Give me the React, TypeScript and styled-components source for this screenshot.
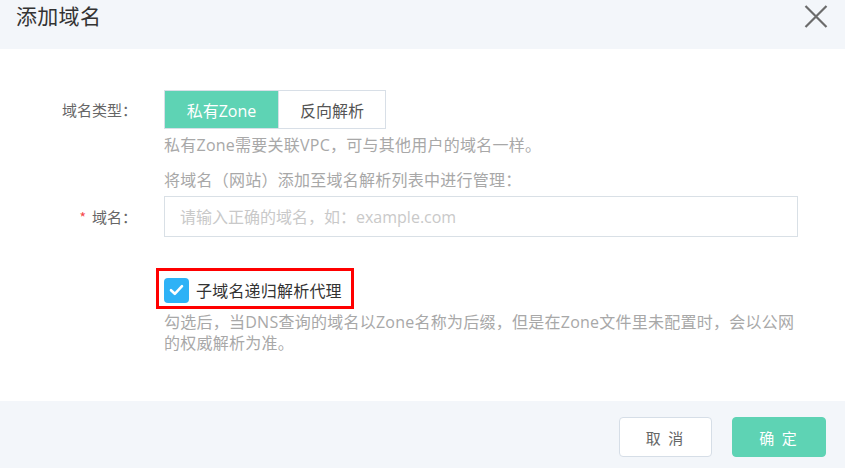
import React from "react";
import styled, { createGlobalStyle } from "styled-components";

const GlobalStyle = createGlobalStyle`
  html, body { margin: 0; padding: 0; background: #ffffff; }
  body {
    font-family: "Open Sans", "Noto Sans CJK SC", sans-serif;
    -webkit-font-smoothing: antialiased;
  }
  * { box-sizing: border-box; }
`;

const Dialog = styled.div`
  width: 845px;
  height: 468px;
  display: flex;
  flex-direction: column;
  background: #ffffff;
  overflow: hidden;
`;

const Header = styled.div`
  height: 49px;
  flex: none;
  background: #f3f6fa;
  display: flex;
  align-items: flex-start;
  justify-content: space-between;
  padding: 0 17px 0 16px;
`;

const Title = styled.h1`
  margin: 0;
  font-size: 21px;
  font-weight: 400;
  line-height: 30px;
  color: #333333;
  letter-spacing: 0.3px;
  font-family: "Noto Sans CJK SC", sans-serif;
`;

const CloseButton = styled.button`
  border: none;
  background: transparent;
  padding: 0;
  margin-top: 4px;
  width: 25px;
  height: 24px;
  display: flex;
  align-items: center;
  justify-content: center;
  cursor: pointer;
`;

const Body = styled.div`
  flex: 1;
  padding: 41px 47px 0 0;
  display: flex;
  flex-direction: column;
`;

const FormRow = styled.div<{ $mt?: number }>`
  display: grid;
  grid-template-columns: 137px 1fr;
  column-gap: 27px;
  align-items: center;
  margin-top: ${(p) => p.$mt ?? 0}px;
`;

const Label = styled.label`
  font-size: 15px;
  color: #666666;
  text-align: right;
  white-space: nowrap;
  line-height: 20px;
  font-family: "Noto Sans CJK SC", sans-serif;
`;

const Required = styled.span`
  color: #f5484a;
  margin-right: 6px;
  font-size: 14px;
`;

const Segment = styled.div`
  display: inline-flex;
  height: 39px;
  border: 1px solid #d8dfe7;
  justify-self: start;
`;

const SegmentItem = styled.button<{ $active?: boolean }>`
  border: none;
  margin: 0;
  height: 100%;
  width: ${(p) => (p.$active ? 113 : 107)}px;
  padding: 0;
  font-size: 16px;
  font-family: "Open Sans", "Noto Sans CJK SC", sans-serif;
  background: ${(p) => (p.$active ? "#5ed3b4" : "#ffffff")};
  color: ${(p) => (p.$active ? "#ffffff" : "#555555")};
  cursor: pointer;
  & + & {
    border-left: 1px solid #d8dfe7;
  }
`;

const Hint = styled.div<{ $mt?: number }>`
  grid-column: 2;
  font-size: 16px;
  line-height: 21px;
  letter-spacing: 0.25px;
  color: #a8a8a8;
  margin-top: ${(p) => p.$mt ?? 0}px;
`;

const TextInput = styled.input`
  height: 41px;
  width: 100%;
  border: 1px solid #d9e0e6;
  padding: 0 15px;
  font-size: 16px;
  font-family: "Open Sans", "Noto Sans CJK SC", sans-serif;
  color: #333333;
  outline: none;
  &::placeholder {
    color: #c9c9c9;
  }
`;

const Highlight = styled.div`
  grid-column: 2;
  justify-self: start;
  margin-left: -8px;
  height: 41px;
  border: 3px solid #ff0000;
  padding: 3px 9px 0 5px;
  display: inline-flex;
  align-items: center;
  gap: 7px;
`;

const CheckBox = styled.span`
  width: 25px;
  height: 25px;
  border-radius: 4px;
  background: #2eb2f6;
  display: inline-flex;
  align-items: center;
  justify-content: center;
`;

const CheckLabel = styled.span`
  font-size: 16px;
  color: #333333;
  line-height: 22px;
  letter-spacing: 0.2px;
  font-family: "Noto Sans CJK SC", sans-serif;
`;

const Footer = styled.div`
  height: 67px;
  flex: none;
  background: #f3f6fa;
  display: flex;
  justify-content: flex-end;
  align-items: flex-start;
  padding: 16px 19px 0 0;
  gap: 20px;
`;

const Button = styled.button<{ $primary?: boolean }>`
  width: ${(p) => (p.$primary ? 94 : 93)}px;
  height: 40px;
  border-radius: 4px;
  border: 1px solid ${(p) => (p.$primary ? "#5ed3b4" : "#d6dee7")};
  background: ${(p) => (p.$primary ? "#5ed3b4" : "#ffffff")};
  color: ${(p) => (p.$primary ? "#ffffff" : "#666666")};
  font-size: 15px;
  letter-spacing: 2px;
  font-family: "Noto Sans CJK SC", sans-serif;
  cursor: pointer;
`;

export default function App() {
  return (
    <>
      <GlobalStyle />
      <Dialog>
        <Header>
          <Title>添加域名</Title>
          <CloseButton aria-label="close">
            <svg width="24" height="23" viewBox="0 0 24 23">
              <path d="M1.5 1 L22.5 22 M22.5 1 L1.5 22" stroke="#6b6b6b" strokeWidth="2.2" fill="none" />
            </svg>
          </CloseButton>
        </Header>
        <Body>
          <FormRow>
            <Label>域名类型：</Label>
            <Segment>
              <SegmentItem $active>私有Zone</SegmentItem>
              <SegmentItem>反向解析</SegmentItem>
            </Segment>
            <Hint $mt={6}>私有Zone需要关联VPC，可与其他用户的域名一样。</Hint>
            <Hint $mt={14}>将域名（网站）添加至域名解析列表中进行管理：</Hint>
          </FormRow>
          <FormRow $mt={5}>
            <Label>
              <Required>*</Required>域名：
            </Label>
            <TextInput placeholder="请输入正确的域名，如：example.com" />
          </FormRow>
          <FormRow $mt={31}>
            <Highlight>
              <CheckBox>
                <svg width="15" height="12" viewBox="0 0 15 12">
                  <path d="M2 6.2 L5.8 9.8 L13 2.2" stroke="#ffffff" strokeWidth="2.6" fill="none" strokeLinecap="round" strokeLinejoin="round" />
                </svg>
              </CheckBox>
              <CheckLabel>子域名递归解析代理</CheckLabel>
            </Highlight>
            <Hint $mt={3}>
              勾选后，当DNS查询的域名以Zone名称为后缀，但是在Zone文件里未配置时，会以公网的权威解析为准。
            </Hint>
          </FormRow>
        </Body>
        <Footer>
          <Button>取 消</Button>
          <Button $primary>确 定</Button>
        </Footer>
      </Dialog>
    </>
  );
}
